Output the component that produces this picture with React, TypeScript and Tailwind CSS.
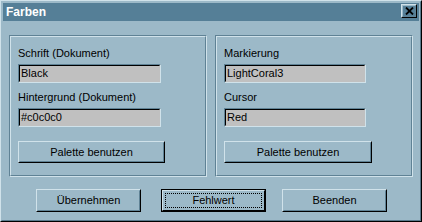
import React from 'react'

const raised = 'border border-t-[#d0e2ea] border-l-[#d0e2ea] border-r-black border-b-black'
const raisedInner = 'border border-t-[#9cb9c8] border-l-[#9cb9c8] border-r-[#5f8295] border-b-[#5f8295]'

function Field({ label, value, w }: { label: string; value: string; w: string }) {
  return (
    <div className="flex flex-col">
      <div className="h-[14px] leading-[14px] text-[11px] text-black">{label}</div>
      <div className={`mt-[4px] h-[19px] ${w} border border-t-[#5f8295] border-l-[#5f8295] border-r-[#d0e2ea] border-b-[#d0e2ea]`}>
        <div className="h-full border border-t-black border-l-black border-r-[#c0c0c0] border-b-[#c0c0c0] bg-[#c0c0c0] pl-[1px] text-[11px] leading-[15px] text-black">
          {value}
        </div>
      </div>
    </div>
  )
}

function Button({ label, w, h = 'h-[22px]' }: { label: string; w: string; h?: string }) {
  return (
    <div className={`${w} ${h} ${raised}`}>
      <div className={`h-full ${raisedInner} flex items-center justify-center text-[11px] text-black`}>{label}</div>
    </div>
  )
}

function Group({ children }: { children: React.ReactNode }) {
  return (
    <div className="w-[198px] h-[142px] border border-t-[#5f8295] border-l-[#5f8295] border-r-[#d0e2ea] border-b-[#d0e2ea]">
      <div className="h-full border border-t-[#d0e2ea] border-l-[#d0e2ea] border-r-[#5f8295] border-b-[#5f8295] pl-[7px] pt-[9px] flex flex-col">
        {children}
      </div>
    </div>
  )
}

export default function App() {
  return (
    <div className="w-[422px] h-[222px] bg-[#9cb9c8] font-['Liberation_Sans',Arial,sans-serif] border border-t-[#d0e2ea] border-l-[#d0e2ea] border-r-black border-b-black">
      <div className="h-full border border-t-[#9cb9c8] border-l-[#9cb9c8] border-r-[#587a8c] border-b-[#587a8c] p-px flex flex-col">
        {/* title bar */}
        <div className="h-[18px] bg-[#557f97] flex items-start justify-between pl-[3px] pr-[2px]">
          <span className="text-white font-bold text-[12px] leading-[18px]">Farben</span>
          <div className={`mt-px w-[16px] h-[14px] ${raised}`}>
            <div className={`h-full ${raisedInner} flex items-center justify-center`}>
              <svg width="9" height="8" viewBox="0 0 9 8">
                <path d="M1 0.5 L8 7.5 M8 0.5 L1 7.5" stroke="black" strokeWidth="1.8" />
              </svg>
            </div>
          </div>
        </div>

        <div className="flex-1 flex flex-col px-[6px] pt-[14px]">
          <div className="flex gap-[8px]">
            <Group>
              <Field label="Schrift (Dokument)" value="Black" w="w-[143px]" />
              <div className="mt-[7px]">
                <Field label="Hintergrund (Dokument)" value="#c0c0c0" w="w-[143px]" />
              </div>
              <div className="mt-[14px]">
                <Button label="Palette benutzen" w="w-[147px]" />
              </div>
            </Group>
            <Group>
              <Field label="Markierung" value="LightCoral3" w="w-[142px]" />
              <div className="mt-[7px]">
                <Field label="Cursor" value="Red" w="w-[142px]" />
              </div>
              <div className="mt-[14px]">
                <Button label="Palette benutzen" w="w-[148px]" />
              </div>
            </Group>
          </div>

          <div className="mt-[12px] flex items-start pl-[27px]">
            <Button label="Übernehmen" w="w-[105px]" h="h-[23px]" />
            <div className="ml-[20px] w-[105px] h-[23px] border border-black">
              <div className="h-full border border-t-[#d0e2ea] border-l-[#d0e2ea] border-r-black border-b-black p-[2px]">
                <div className="h-full border border-dotted border-black flex items-center justify-center text-[11px] text-black">
                  Fehlwert
                </div>
              </div>
            </div>
            <div className="ml-[16px]">
              <Button label="Beenden" w="w-[105px]" h="h-[23px]" />
            </div>
          </div>
        </div>
      </div>
    </div>
  )
}
